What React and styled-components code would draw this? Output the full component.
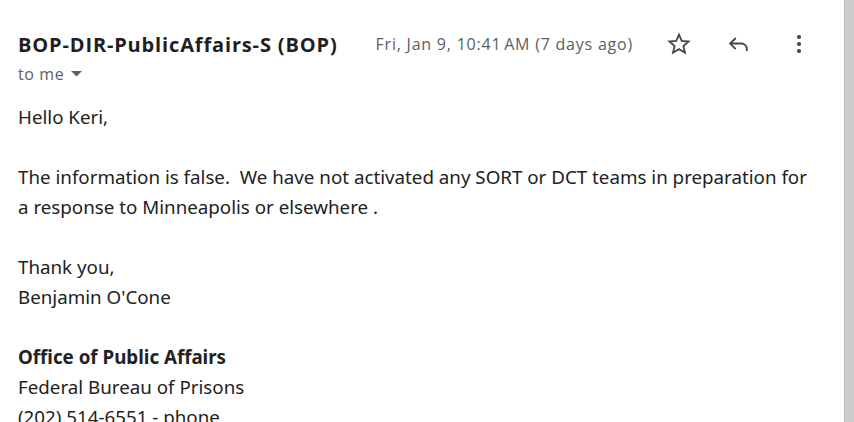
import React from "react";
import styled, { createGlobalStyle } from "styled-components";

const Global = createGlobalStyle`
  html, body { margin: 0; padding: 0; background: #fff; }
  body { width: 854px; height: 422px; overflow: hidden; }
`;

const Frame = styled.div`
  display: flex;
  width: 854px;
  height: 422px;
  overflow: hidden;
`;

const Content = styled.div`
  flex: 1;
  padding: 31px 0 0 18px;
  min-width: 0;
`;

const Scrollbar = styled.div`
  width: 9px;
  background: #cdcdcd;
  border-left: 1px solid #b9b9b9;
`;

const HeaderRow = styled.div`
  display: flex;
  align-items: center;
  height: 26px;
`;

const Sender = styled.div`
  font-family: "Open Sans", Roboto, sans-serif;
  font-weight: 700;
  font-size: 20px;
  letter-spacing: 0.85px;
  color: #1f1f1f;
  white-space: nowrap;
`;

const DateText = styled.div`
  font-family: "Open Sans", Roboto, sans-serif;
  font-size: 16px;
  letter-spacing: 0.78px;
  color: #5e5e5e;
  white-space: nowrap;
  margin-left: 38px;
`;

const Icons = styled.div`
  display: flex;
  align-items: center;
  margin-left: 34px;
  gap: 36px;
`;

const IconBtn = styled.div`
  width: 24px;
  height: 24px;
  display: flex;
  align-items: center;
  justify-content: center;
  color: #444746;
`;

const ToMe = styled.div`
  display: flex;
  align-items: center;
  gap: 7px;
  margin-top: 6px;
  font-family: "Open Sans", Roboto, sans-serif;
  font-size: 16px;
  letter-spacing: 0.6px;
  color: #5e5e5e;
`;

const Body = styled.div`
  margin-top: 17px;
  font-family: "Noto Sans", "Open Sans", sans-serif;
  font-size: 18.75px;
  line-height: 30px;
  color: #222;
  white-space: pre-wrap;
  max-width: 800px;
`;

const Para = styled.p`
  margin: 0 0 30px 0;
`;

const Line = styled.div`
  font-weight: ${(p) => (p.$bold ? 700 : 400)};
`;

const Star = () => (
  <svg width="24" height="24" viewBox="0 0 24 24" fill="none" stroke="currentColor" strokeWidth="1.8" strokeLinejoin="miter">
    <path d="M12 2.6l2.75 6.3 6.85.6-5.2 4.5 1.58 6.7L12 17.15l-5.98 3.55 1.58-6.7-5.2-4.5 6.85-.6z" />
  </svg>
);

const Reply = () => (
  <svg width="26" height="24" viewBox="0 0 26 24" fill="none" stroke="currentColor" strokeWidth="2">
    <path d="M9.5 5.5L3.5 11.5l6 6" />
    <path d="M3.5 11.5h12a6 6 0 0 1 6 6v2" />
  </svg>
);

const More = () => (
  <svg width="24" height="24" viewBox="0 0 24 24" fill="currentColor">
    <circle cx="12" cy="5" r="2.1" />
    <circle cx="12" cy="12" r="2.1" />
    <circle cx="12" cy="19" r="2.1" />
  </svg>
);

const Caret = () => (
  <svg width="11" height="6" viewBox="0 0 11 6" fill="#5e5e5e">
    <path d="M0 0h11L5.5 5.5z" />
  </svg>
);

export default function App() {
  return (
    <Frame>
      <Global />
      <Content>
        <HeaderRow>
          <Sender>BOP-DIR-PublicAffairs-S (BOP)</Sender>
          <DateText>Fri, Jan 9, 10:41{"\u202f"}AM (7 days ago)</DateText>
          <Icons>
            <IconBtn><Star /></IconBtn>
            <IconBtn><Reply /></IconBtn>
            <IconBtn><More /></IconBtn>
          </Icons>
        </HeaderRow>
        <ToMe>to me <Caret /></ToMe>
        <Body>
          <Para>Hello Keri,</Para>
          <Para>The information is false.  We have not activated any SORT or DCT teams in preparation for a response to Minneapolis or elsewhere .</Para>
          <Para>
            <Line>Thank you,</Line>
            <Line>Benjamin O'Cone</Line>
          </Para>
          <Line $bold>Office of Public Affairs</Line>
          <Line>Federal Bureau of Prisons</Line>
          <Line>(202) 514-6551 - phone</Line>
        </Body>
      </Content>
      <Scrollbar />
    </Frame>
  );
}
